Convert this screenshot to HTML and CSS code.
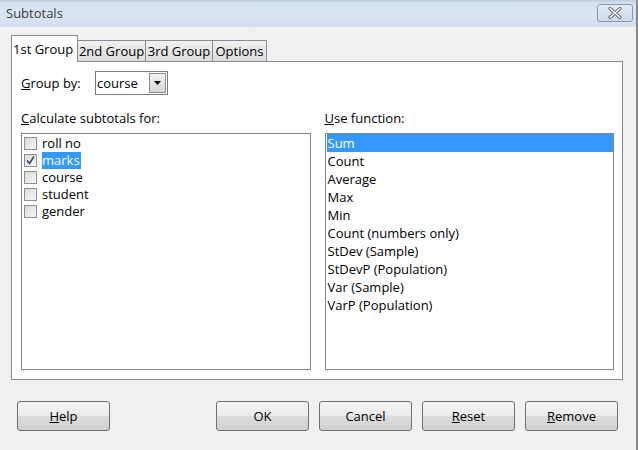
FILE: index.html
```html
<!DOCTYPE html>
<html lang="en">
<head>
    <meta charset="UTF-8">
    <meta name="viewport" content="width=device-width, initial-scale=1.0">
    <title>Subtotals</title>
    <link rel="stylesheet" href="styles.css">
</head>
<body>
    <div class="window">
        <!-- Title bar -->
        <div class="titlebar">
            <span class="title">Subtotals</span>
            <div class="close-btn">
                <svg width="18" height="12" viewBox="0 0 18 12">
                    <path d="M4 1.5 L14 10.5 M14 1.5 L4 10.5" stroke="#5a6578" stroke-width="3.2" stroke-linecap="round"/>
                    <path d="M4 1.5 L14 10.5 M14 1.5 L4 10.5" stroke="#ffffff" stroke-width="1.4" stroke-linecap="round"/>
                </svg>
            </div>
        </div>

        <div class="content">
            <!-- Tabs -->
            <div class="tabs">
                <div class="tab active" style="width: 67px;">1st Group</div>
                <div class="tab" style="width: 68px;">2nd Group</div>
                <div class="tab" style="width: 67px;">3rd Group</div>
                <div class="tab" style="width: 54px;">Options</div>
            </div>

            <div class="panel">
                <div class="group-row">
                    <span class="group-label"><u>G</u>roup by:</span>
                    <div class="dropdown">
                        <span class="dropdown-value">course</span>
                        <div class="dropdown-btn">
                            <svg width="7" height="4" viewBox="0 0 7 4"><path d="M0 0 H7 L3.5 4 Z" fill="#000"/></svg>
                        </div>
                    </div>
                </div>

                <div class="columns">
                    <div class="column">
                        <div class="col-label"><u>C</u>alculate subtotals for:</div>
                        <div class="listbox checklist">
                            <div class="check-row"><span class="checkbox"></span><span class="item-text">roll no</span></div>
                            <div class="check-row"><span class="checkbox checked">
                                <svg width="11" height="11" viewBox="0 0 11 11"><path d="M2 5.5 L4.5 8.5 L9 1.5" stroke="#3b4a6b" stroke-width="1.6" fill="none"/></svg>
                            </span><span class="item-text selected">marks</span></div>
                            <div class="check-row"><span class="checkbox"></span><span class="item-text">course</span></div>
                            <div class="check-row"><span class="checkbox"></span><span class="item-text">student</span></div>
                            <div class="check-row"><span class="checkbox"></span><span class="item-text">gender</span></div>
                        </div>
                    </div>
                    <div class="column">
                        <div class="col-label"><u>U</u>se function:</div>
                        <div class="listbox">
                            <div class="func-row selected">Sum</div>
                            <div class="func-row">Count</div>
                            <div class="func-row">Average</div>
                            <div class="func-row">Max</div>
                            <div class="func-row">Min</div>
                            <div class="func-row">Count (numbers only)</div>
                            <div class="func-row">StDev (Sample)</div>
                            <div class="func-row">StDevP (Population)</div>
                            <div class="func-row">Var (Sample)</div>
                            <div class="func-row">VarP (Population)</div>
                        </div>
                    </div>
                </div>
            </div>

            <!-- Buttons -->
            <div class="buttons">
                <button class="btn"><u>H</u>elp</button>
                <div class="spacer"></div>
                <button class="btn">OK</button>
                <button class="btn">Cancel</button>
                <button class="btn"><u>R</u>eset</button>
                <button class="btn"><u>R</u>emove</button>
            </div>
        </div>
    </div>
</body>
</html>
```

FILE: styles.css
```css
:root {
    --border-color: #898c95;
    --list-border: #828790;
    --highlight: #3399ff;
    --face-bg: #f0f0f0;
}
body {
    margin: 0;
    padding: 0;
    background: var(--face-bg);
    font-family: "Open Sans", "Noto Sans", sans-serif;
    font-size: 13px;
    color: #000000;
}
.window {
    width: 636px;
    height: 450px;
    border-right: 2px solid #8a8a8a;
    background: var(--face-bg);
    overflow: hidden;
}
.titlebar {
    height: 27px;
    display: flex;
    align-items: center;
    justify-content: space-between;
    padding: 0 3px 0 6px;
    background: linear-gradient(to bottom, #bccbdd 0px, #d4e1ef 3px, #dae5f2 14px, #d2dfee 27px);
}
.title {
    color: #3a3a3a;
    font-size: 13px;
    margin-top: -1px;
}
.close-btn {
    width: 34px;
    height: 16px;
    margin-top: -1px;
    border: 1px solid #8a97aa;
    border-radius: 3px;
    background: linear-gradient(to bottom, #e4ebf4, #cdd9e7);
    display: flex;
    align-items: center;
    justify-content: center;
}
.content {
    padding: 8px 0 0 11px;
}
.tabs {
    display: flex;
    align-items: flex-end;
    height: 26px;
    position: relative;
    z-index: 1;
}
.tab {
    box-sizing: border-box;
    height: 21px;
    line-height: 20px;
    text-align: center;
    border: 1px solid var(--border-color);
    border-bottom: none;
    border-left: none;
    background: linear-gradient(to bottom, #f0f0f0, #dcdcdc);
    white-space: nowrap;
}
.tab.active {
    height: 27px;
    line-height: 27px;
    margin-bottom: -1px;
    border-left: 1px solid var(--border-color);
    background: #ffffff;
    text-align: left;
    padding-left: 1px;
}
.panel {
    box-sizing: border-box;
    width: 612px;
    height: 319px;
    border: 1px solid var(--border-color);
    background: #ffffff;
    padding: 9px 8px 0 9px;
}
.group-row {
    display: flex;
    align-items: center;
    height: 24px;
}
.group-label {
    width: 74px;
}
.dropdown {
    box-sizing: border-box;
    width: 73px;
    height: 24px;
    border: 1px solid #7a7a7a;
    display: flex;
    align-items: center;
    justify-content: space-between;
    padding: 1px;
    background: #ffffff;
}
.dropdown-btn {
    box-sizing: border-box;
    width: 17px;
    height: 20px;
    border: 1px solid #8c8c8c;
    background: linear-gradient(to bottom, #f2f2f2, #d6d6d6);
    display: flex;
    align-items: center;
    justify-content: center;
}
.columns {
    display: flex;
    gap: 14px;
    margin-top: 15px;
}
.column {
    width: 290px;
}
.col-label {
    line-height: 16px;
    margin-bottom: 7px;
}
.listbox {
    box-sizing: border-box;
    height: 237px;
    border: 1px solid var(--list-border);
    background: #ffffff;
    padding: 0 0 0 1px;
}
.checklist {
    padding-top: 1px;
}
.check-row {
    display: flex;
    align-items: center;
    height: 17px;
}
.checkbox {
    box-sizing: border-box;
    width: 13px;
    height: 13px;
    margin-left: 1px;
    margin-right: 5px;
    border: 1px solid #8e8f8f;
    background: linear-gradient(135deg, #d9dadb, #f7f7f7);
    display: flex;
    align-items: center;
    justify-content: center;
}
.item-text {
    line-height: 17px;
    padding: 0 1px 0 0;
}
.item-text.selected {
    background: var(--highlight);
    color: #ffffff;
}
.func-row {
    height: 18px;
    line-height: 19px;
    padding-left: 1px;
}
.func-row.selected {
    background: var(--highlight);
    color: #ffffff;
}
.buttons {
    display: flex;
    gap: 10px;
    margin-top: 21px;
    padding-left: 6px;
    width: 601px;
}
.spacer {
    flex: 1;
}
.btn {
    box-sizing: border-box;
    width: 93px;
    height: 30px;
    border: 1px solid #707070;
    border-radius: 3px;
    background: linear-gradient(to bottom, #f4f4f4 0%, #ebebeb 50%, #dddddd 51%, #cfcfcf 100%);
    font-family: "Open Sans", "Noto Sans", sans-serif;
    font-size: 13px;
    color: #000000;
    padding: 0;
}
```
